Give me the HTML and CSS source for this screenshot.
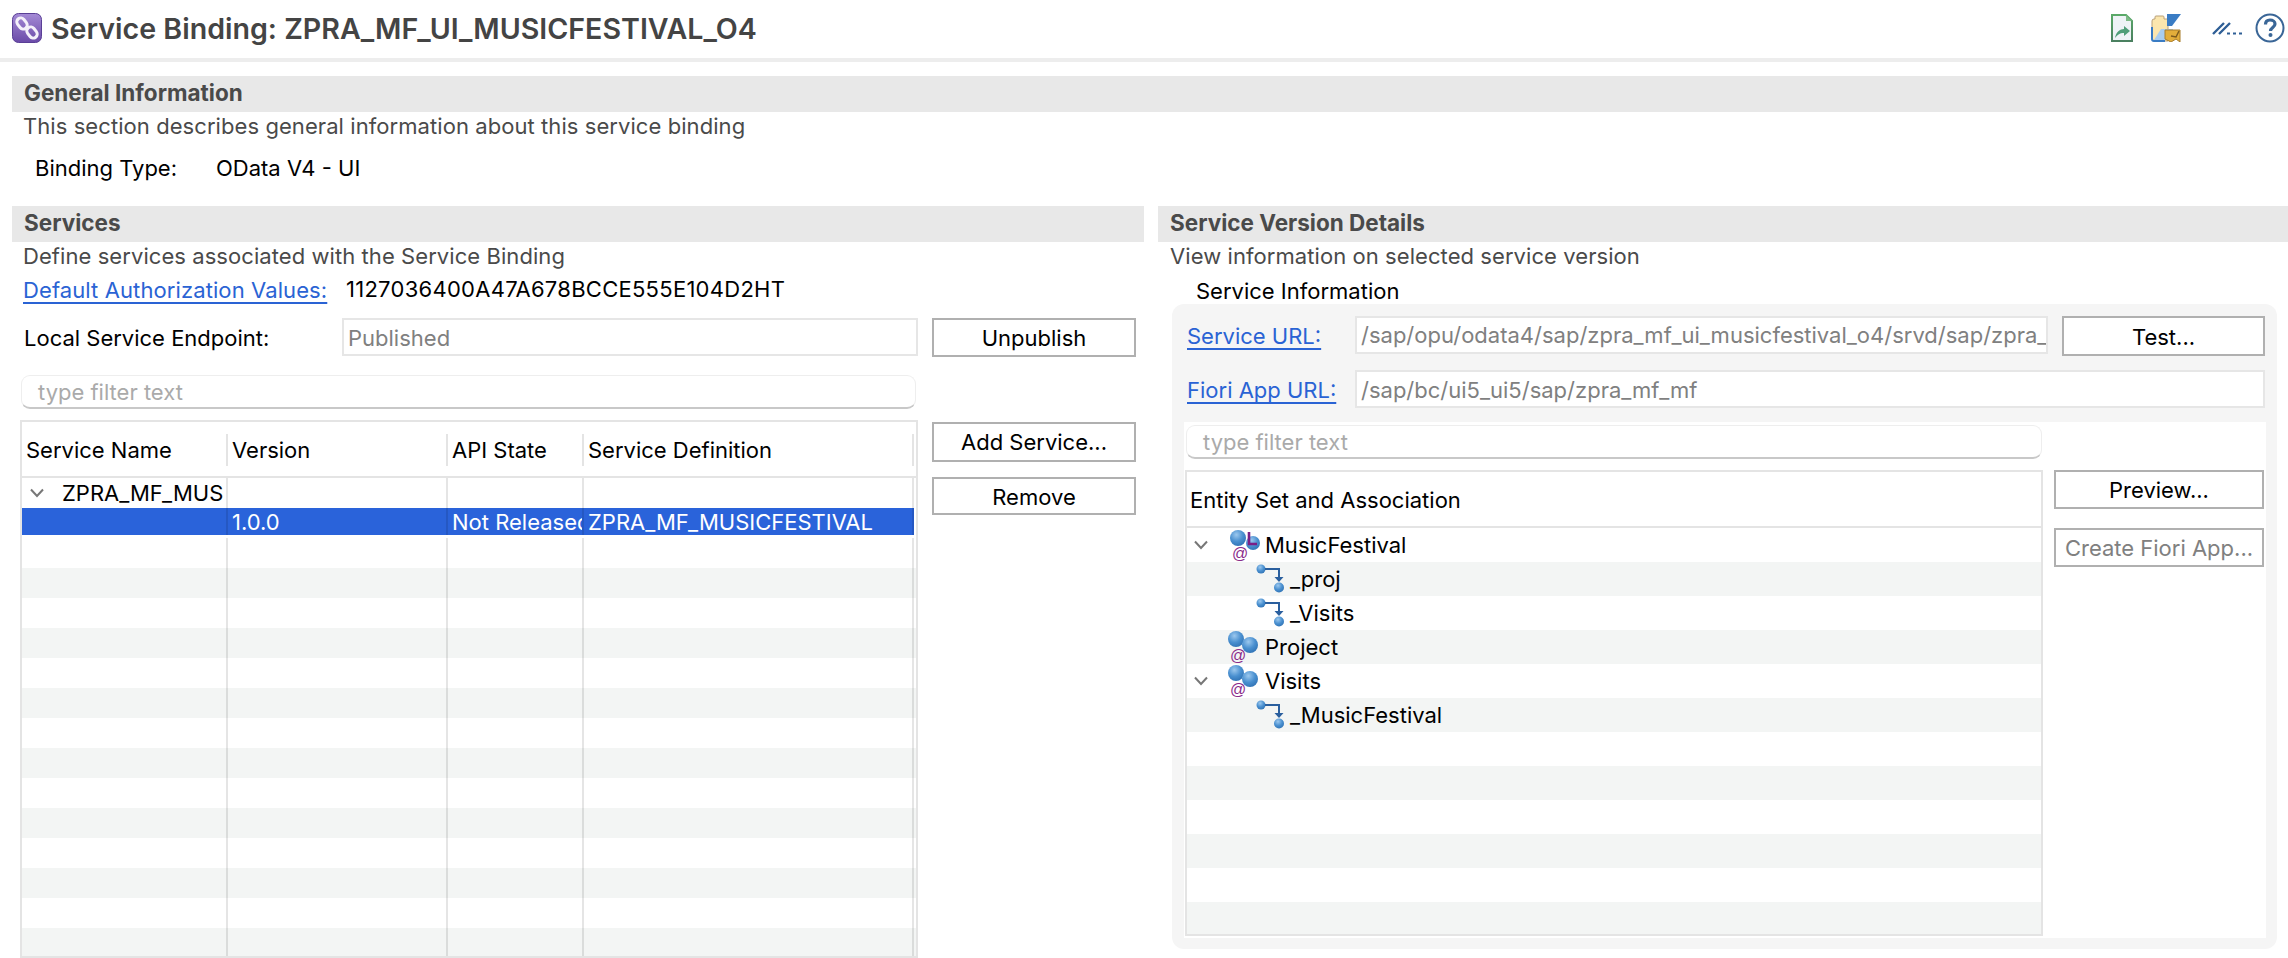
FILE: index.html
```html
<!DOCTYPE html>
<html>
<head>
<meta charset="utf-8">
<title>Service Binding</title>
<link rel="stylesheet" href="styles.css">
</head>
<body>

<!-- editor title -->
<div class="titleBar">
    <svg class="titleIcon" width="30" height="30" viewBox="0 0 30 30">
        <defs>
            <linearGradient id="purple" x1="0" y1="0" x2="0" y2="1">
                <stop offset="0" stop-color="#a58bd6"/>
                <stop offset="1" stop-color="#6a4aa8"/>
            </linearGradient>
        </defs>
        <rect x="0.5" y="0.5" width="29" height="29" rx="6" fill="url(#purple)" stroke="#5a3f96"/>
        <g fill="none" stroke="#f4f0fa" stroke-width="3">
            <rect x="6" y="4.5" width="8" height="12" rx="4" transform="rotate(-38 10 10.5)"/>
            <rect x="16" y="13.5" width="8" height="12" rx="4" transform="rotate(-38 20 19.5)"/>
        </g>
    </svg>
    <h1>Service Binding: ZPRA_MF_UI_MUSICFESTIVAL_O4</h1>
    <div class="toolbar">
        <svg class="toolDoc" width="22" height="28" viewBox="0 0 22 28">
            <defs>
                <linearGradient id="docEdge" x1="0" y1="0" x2="0" y2="1">
                    <stop offset="0" stop-color="#5aa968"/>
                    <stop offset="1" stop-color="#4a8060"/>
                </linearGradient>
            </defs>
            <path d="M1 1H15L21 7V27H1Z" fill="#eef3f6" stroke="url(#docEdge)" stroke-width="2"/>
            <path d="M15 1V7H21Z" fill="#7dba86"/>
            <path d="M4 24C5 18 9 15 13 15V12L19 17L13 22V19C10 18.5 7 20 4 24Z" fill="#4f9e78"/>
        </svg>
        <svg class="toolFolder" width="30" height="28" viewBox="0 0 30 28">
            <path d="M1 7Q1 5 3 5H4V3Q4 2 5 2H12Q13 2 13 3V5H17V27H3Q1 27 1 25Z" fill="#fbe6ae" stroke="#b9a078"/>
            <path d="M16 0H30L21 12H16Z" fill="#3a7cc4"/>
            <path d="M3 26L10 15H22L22 26Z" fill="#a9cdf0"/>
            <path d="M1 13V25Q1 27 3 27H14" fill="none" stroke="#3a7cc4" stroke-width="2"/>
            <path d="M14 16H29V28L25 25L20 28L14 25Z" fill="#e3ad3a" stroke="#a87c2a"/>
            <path d="M20 22L25 23L28 17" fill="none" stroke="#7c5a1e" stroke-width="1.5"/>
        </svg>
        <svg class="toolPref" width="30" height="14" viewBox="0 0 30 14">
            <path d="M1 13L12 2M7 13L18 2" stroke="#2f5f96" stroke-width="2.4" fill="none"/>
            <path d="M15 12.5H18M21 12.5H24M27 12.5H30" stroke="#2f5f96" stroke-width="2" fill="none"/>
        </svg>
        <svg class="toolHelp" width="30" height="30" viewBox="0 0 30 30">
            <circle cx="15" cy="15" r="13.5" fill="#fff" stroke="#3a6697" stroke-width="2"/>
            <path d="M10.5 11.5C10.5 8.5 12.5 7 15 7C18 7 20 8.7 20 11C20 14.5 15.5 14.5 15.5 18" fill="none" stroke="#3a6697" stroke-width="3.2"/>
            <circle cx="15.5" cy="22" r="2" fill="#3a6697"/>
        </svg>
    </div>
</div>
<div class="titleRule"></div>

<div class="page">

    <!-- General Information -->
    <h2 class="sectionBar">General Information</h2>
    <p class="sectionDesc">This section describes general information about this service binding</p>
    <div class="bindingType">
        <span class="bindingLabel">Binding Type:</span>
        <span>OData V4 - UI</span>
    </div>

    <div class="columns">

        <!-- Services -->
        <div class="colLeft">
            <h2 class="sectionBar">Services</h2>
            <p class="sectionDesc">Define services associated with the Service Binding</p>
            <div class="authRow">
                <a class="link authLink" href="#">Default Authorization Values:</a>
                <span class="authValue">1127036400A47A678BCCE555E104D2HT</span>
            </div>
            <div class="endpointRow">
                <span class="endpointLabel">Local Service Endpoint:</span>
                <div class="textField endpointField">Published</div>
                <div class="btn endpointBtn">Unpublish</div>
            </div>
            <div class="servicesRow">
                <div class="servicesMain">
                    <div class="filter servicesFilter">type filter text</div>
                    <div class="grid servicesGrid">
                        <div class="gridHead">
                            <div class="headCell">Service Name</div>
                            <div class="headCell">Version</div>
                            <div class="headCell">API State</div>
                            <div class="headCell">Service Definition</div>
                        </div>
                        <div class="gridRow">
                            <div class="cell treeCell"><svg class="chevron" width="16" height="10" viewBox="0 0 16 10"><path d="M2 1.5L8 8L14 1.5" fill="none" stroke="#777" stroke-width="2"/></svg><span class="treeName">ZPRA_MF_MUS</span></div>
                            <div class="cell"></div><div class="cell"></div><div class="cell"></div>
                        </div>
                        <div class="gridRow selected">
                            <div class="cell"></div>
                            <div class="cell">1.0.0</div>
                            <div class="cell">Not Released</div>
                            <div class="cell">ZPRA_MF_MUSICFESTIVAL</div>
                        </div>
                        <div class="gridRow"><div class="cell"></div><div class="cell"></div><div class="cell"></div><div class="cell"></div></div>
                        <div class="gridRow alt"><div class="cell"></div><div class="cell"></div><div class="cell"></div><div class="cell"></div></div>
                        <div class="gridRow"><div class="cell"></div><div class="cell"></div><div class="cell"></div><div class="cell"></div></div>
                        <div class="gridRow alt"><div class="cell"></div><div class="cell"></div><div class="cell"></div><div class="cell"></div></div>
                        <div class="gridRow"><div class="cell"></div><div class="cell"></div><div class="cell"></div><div class="cell"></div></div>
                        <div class="gridRow alt"><div class="cell"></div><div class="cell"></div><div class="cell"></div><div class="cell"></div></div>
                        <div class="gridRow"><div class="cell"></div><div class="cell"></div><div class="cell"></div><div class="cell"></div></div>
                        <div class="gridRow alt"><div class="cell"></div><div class="cell"></div><div class="cell"></div><div class="cell"></div></div>
                        <div class="gridRow"><div class="cell"></div><div class="cell"></div><div class="cell"></div><div class="cell"></div></div>
                        <div class="gridRow alt"><div class="cell"></div><div class="cell"></div><div class="cell"></div><div class="cell"></div></div>
                        <div class="gridRow"><div class="cell"></div><div class="cell"></div><div class="cell"></div><div class="cell"></div></div>
                        <div class="gridRow alt"><div class="cell"></div><div class="cell"></div><div class="cell"></div><div class="cell"></div></div>
                        <div class="gridRow"><div class="cell"></div><div class="cell"></div><div class="cell"></div><div class="cell"></div></div>
                        <div class="gridRow alt"><div class="cell"></div><div class="cell"></div><div class="cell"></div><div class="cell"></div></div>
                        <div class="gridRow"><div class="cell"></div><div class="cell"></div><div class="cell"></div><div class="cell"></div></div>
                        <div class="gridRow alt"><div class="cell"></div><div class="cell"></div><div class="cell"></div><div class="cell"></div></div>
                    </div>
                </div>
                <div class="servicesBtns">
                    <div class="btn addBtn">Add Service...</div>
                    <div class="btn removeBtn">Remove</div>
                </div>
            </div>
        </div>

        <!-- Service Version Details -->
        <div class="colRight">
            <h2 class="sectionBar">Service Version Details</h2>
            <p class="sectionDesc versionDesc">View information on selected service version</p>
            <div class="infoTitle">Service Information</div>
            <div class="infoPanel">
                <div class="urlRow">
                    <a class="link urlLink" href="#">Service URL:</a>
                    <div class="textField urlField">/sap/opu/odata4/sap/zpra_mf_ui_musicfestival_o4/srvd/sap/zpra_</div>
                    <div class="btn testBtn">Test...</div>
                </div>
                <div class="urlRow fioriRow">
                    <a class="link urlLink" href="#">Fiori App URL:</a>
                    <div class="textField fioriField">/sap/bc/ui5_ui5/sap/zpra_mf_mf</div>
                </div>
                <div class="entityBox">
                    <div class="entityMain">
                        <div class="filter entityFilter">type filter text</div>
                        <div class="grid entityGrid">
                            <div class="gridHead entityHead">Entity Set and Association</div>
                            <div class="entityRow">
                                <svg class="chevron" width="16" height="10" viewBox="0 0 16 10"><path d="M2 1.5L8 8L14 1.5" fill="none" stroke="#777" stroke-width="2"/></svg>
                                <svg class="entityIcon" width="32" height="32" viewBox="0 0 32 32">
                                    <defs>
                                        <radialGradient id="ball" cx="0.4" cy="0.3" r="0.75">
                                            <stop offset="0" stop-color="#9cc8ee"/>
                                            <stop offset="0.55" stop-color="#4a90d0"/>
                                            <stop offset="1" stop-color="#2f72b4"/>
                                        </radialGradient>
                                    </defs>
                                    <circle cx="10" cy="9" r="8" fill="url(#ball)"/>
                                    <circle cx="25" cy="14" r="7" fill="url(#ball)"/>
                                    <path d="M21 3V15H29" fill="none" stroke="#7b1f86" stroke-width="2.6"/>
                                    <text class="atSign" x="4" y="30">@</text>
                                </svg>
                                <span>MusicFestival</span>
                            </div>
                            <div class="entityRow alt child">
                                <svg class="assocIcon" width="28" height="30" viewBox="0 0 28 30"><circle cx="5" cy="5" r="4.5" fill="url(#ball)"/><path d="M9 5H23V15" fill="none" stroke="#2a5f9e" stroke-width="2"/><path d="M18.5 13H27.5L23 18Z" fill="#2a5f9e"/><circle cx="23" cy="23.5" r="5" fill="url(#ball)"/></svg>
                                <span>_proj</span>
                            </div>
                            <div class="entityRow child">
                                <svg class="assocIcon" width="28" height="30" viewBox="0 0 28 30"><circle cx="5" cy="5" r="4.5" fill="url(#ball)"/><path d="M9 5H23V15" fill="none" stroke="#2a5f9e" stroke-width="2"/><path d="M18.5 13H27.5L23 18Z" fill="#2a5f9e"/><circle cx="23" cy="23.5" r="5" fill="url(#ball)"/></svg>
                                <span>_Visits</span>
                            </div>
                            <div class="entityRow alt">
                                <span class="chevronGap"></span>
                                <svg class="entityIcon" width="32" height="32" viewBox="0 0 32 32">
                                    <circle cx="8" cy="8" r="8" fill="url(#ball)"/>
                                    <circle cx="22" cy="14" r="8" fill="url(#ball)"/>
                                    <text class="atSign" x="2" y="30">@</text>
                                </svg>
                                <span>Project</span>
                            </div>
                            <div class="entityRow">
                                <svg class="chevron" width="16" height="10" viewBox="0 0 16 10"><path d="M2 1.5L8 8L14 1.5" fill="none" stroke="#777" stroke-width="2"/></svg>
                                <svg class="entityIcon" width="32" height="32" viewBox="0 0 32 32">
                                    <circle cx="8" cy="8" r="8" fill="url(#ball)"/>
                                    <circle cx="22" cy="14" r="8" fill="url(#ball)"/>
                                    <text class="atSign" x="2" y="30">@</text>
                                </svg>
                                <span>Visits</span>
                            </div>
                            <div class="entityRow alt child">
                                <svg class="assocIcon" width="28" height="30" viewBox="0 0 28 30"><circle cx="5" cy="5" r="4.5" fill="url(#ball)"/><path d="M9 5H23V15" fill="none" stroke="#2a5f9e" stroke-width="2"/><path d="M18.5 13H27.5L23 18Z" fill="#2a5f9e"/><circle cx="23" cy="23.5" r="5" fill="url(#ball)"/></svg>
                                <span>_MusicFestival</span>
                            </div>
                            <div class="entityRow"></div>
                            <div class="entityRow alt"></div>
                            <div class="entityRow"></div>
                            <div class="entityRow alt"></div>
                            <div class="entityRow"></div>
                            <div class="entityRow alt"></div>
                        </div>
                    </div>
                    <div class="entityBtns">
                        <div class="btn previewBtn">Preview...</div>
                        <div class="btn createBtn">Create Fiori App...</div>
                    </div>
                </div>
            </div>
        </div>

    </div>
</div>

</body>
</html>
```

FILE: styles.css
```css
* {
    box-sizing: border-box;
}
html, body {
    height: 958px;
    overflow: hidden;
}
body {
    margin: 0;
    background-color: #fff;
    color: #000;
    font-family: Inter, "Liberation Sans", sans-serif;
    font-size: 22px;
}
h1, h2, p {
    margin: 0;
}

/* title */
.titleBar {
    display: flex;
    align-items: center;
    height: 58px;
    padding: 0 3px 2px 12px;
}
.titleIcon {
    flex: none;
}
.titleBar h1 {
    margin-left: 9px;
    color: #444;
    font-size: 28.6px;
    font-weight: 600;
    white-space: nowrap;
}
.toolbar {
    display: flex;
    align-items: center;
    margin-left: auto;
}
.toolDoc {
    margin-right: 18px;
}
.toolFolder {
    margin-right: 31px;
}
.toolPref {
    margin-right: 13px;
}
.titleRule {
    height: 4px;
    background-color: #ededed;
}

.page {
    padding-top: 14px;
    padding-left: 12px;
}

.sectionBar {
    height: 36px;
    padding-left: 12px;
    background-color: #e8e8e8;
    color: #4a4a4a;
    font-size: 22.5px;
    font-weight: 700;
    line-height: 33px;
}
.sectionDesc {
    height: 30px;
    padding-left: 11px;
    color: #4a4a4a;
    letter-spacing: 0.07px;
    line-height: 28px;
}
.bindingType {
    display: flex;
    height: 32px;
    margin-top: 10px;
    margin-bottom: 22px;
    padding-left: 23px;
    line-height: 32px;
}
.bindingLabel {
    width: 181px;
}

.columns {
    display: flex;
}
.colLeft {
    flex: none;
    width: 1132px;
}
.colRight {
    flex: none;
    margin-left: 14px;
    width: 1130px;
}

.link {
    color: #2a63d4;
    text-decoration: underline;
    text-underline-offset: 4px;
}

.authRow {
    display: flex;
    align-items: center;
    height: 36px;
    padding-left: 11px;
}
.authLink {
    flex: none;
    width: 323px;
    letter-spacing: 0.1px;
}
.authValue {
    padding-bottom: 2px;
    letter-spacing: 0.27px;
}

.endpointRow {
    display: flex;
    align-items: center;
    height: 38px;
    margin-top: 10px;
    padding-left: 12px;
}
.endpointLabel {
    width: 318px;
    padding-top: 2px;
}
.textField {
    height: 38px;
    padding-left: 4px;
    overflow: hidden;
    border: 2px solid #e6e6e6;
    background-color: #fff;
    color: #808080;
    line-height: 36px;
    white-space: nowrap;
}
.endpointField {
    width: 576px;
}
.btn {
    height: 39px;
    border: 2px solid #b0b0b0;
    background-color: #fff;
    text-align: center;
    line-height: 37px;
    white-space: nowrap;
}
.endpointBtn {
    width: 204px;
    margin-left: 14px;
}

.servicesRow {
    display: flex;
    margin-top: 19px;
}
.servicesMain {
    width: 898px;
    margin-left: 8px;
}
.filter {
    height: 34px;
    padding-left: 16px;
    border: 1px solid #eee;
    border-bottom: 2px solid #c8c8c8;
    border-radius: 9px;
    background-color: #fff;
    color: #aaa;
    line-height: 32px;
}
.servicesFilter {
    width: 895px;
    margin-left: 1px;
}
.servicesBtns {
    width: 204px;
    margin-left: 14px;
    padding-top: 47px;
}
.addBtn {
    height: 40px;
}
.removeBtn {
    height: 38px;
    margin-top: 15px;
    line-height: 36px;
}

/* tables */
.grid {
    overflow: hidden;
    border: 2px solid #e4e4e4;
    background-color: #fff;
}
.servicesGrid {
    height: 538px;
    margin-top: 11px;
}
.gridHead {
    display: grid;
    grid-template-columns: 206px 220px 136px 330px;
    height: 56px;
    padding-top: 12px;
    border-bottom: 2px solid #e4e4e4;
}
.headCell {
    height: 32px;
    padding-left: 4px;
    border-right: 2px solid #e4e4e4;
    line-height: 32px;
}
.gridRow {
    display: grid;
    grid-template-columns: 206px 220px 136px 330px;
    height: 30px;
}
.cell {
    padding-left: 4px;
    overflow: hidden;
    border-right: 2px solid rgba(0, 0, 0, 0.1);
    line-height: 30px;
    white-space: nowrap;
}
.alt {
    background-color: #f3f5f4;
}
.selected {
    height: 27px;
    margin-right: 2px;
    margin-bottom: 3px;
    background-color: #2a63da;
    color: #fff;
}
.selected .cell {
    line-height: 28px;
}
.treeCell {
    display: flex;
    align-items: center;
    padding-left: 7px;
}
.chevron {
    flex: none;
}
.treeName {
    margin-left: 17px;
}

/* service information panel */
.versionDesc {
    padding-left: 12px;
}
.infoTitle {
    height: 32px;
    padding-top: 4px;
    padding-left: 38px;
    line-height: 30px;
}
.infoPanel {
    width: 1105px;
    height: 645px;
    margin-left: 14px;
    padding: 12px 11px 11px 12px;
    border-radius: 12px;
    background-color: #f5f5f5;
}
.urlRow {
    display: flex;
    height: 40px;
    line-height: 40px;
}
.fioriRow {
    height: 38px;
    margin-top: 14px;
}
.urlLink {
    flex: none;
    width: 168px;
    margin-left: 3px;
}
.urlField {
    width: 693px;
    line-height: 35px;
}
.fioriField {
    width: 910px;
}
.testBtn {
    width: 203px;
    height: 40px;
    margin-left: 14px;
    line-height: 38px;
}

.entityBox {
    display: flex;
    height: 516px;
    margin-top: 14px;
    background-color: #fff;
}
.entityMain {
    width: 859px;
}
.entityFilter {
    width: 856px;
    margin-top: 3px;
    margin-left: 2px;
}
.entityGrid {
    width: 858px;
    height: 466px;
    margin-top: 11px;
    margin-left: 1px;
}
.entityHead {
    display: block;
    height: 56px;
    padding-top: 0;
    padding-left: 3px;
    line-height: 57px;
}
.entityRow {
    display: flex;
    align-items: center;
    height: 34px;
    padding-left: 6px;
    white-space: nowrap;
}
.chevronGap {
    flex: none;
    width: 16px;
}
.entityIcon {
    flex: none;
    margin-left: 19px;
    margin-right: 5px;
}
.atSign {
    fill: #8a2a8a;
    font-family: "Liberation Sans", sans-serif;
    font-size: 16px;
}
.child {
    padding-left: 69px;
}
.assocIcon {
    flex: none;
    margin-right: 6px;
}
.entityBtns {
    width: 210px;
    margin-left: 11px;
    padding-top: 48px;
}
.createBtn {
    margin-top: 19px;
    color: #808080;
}
```
